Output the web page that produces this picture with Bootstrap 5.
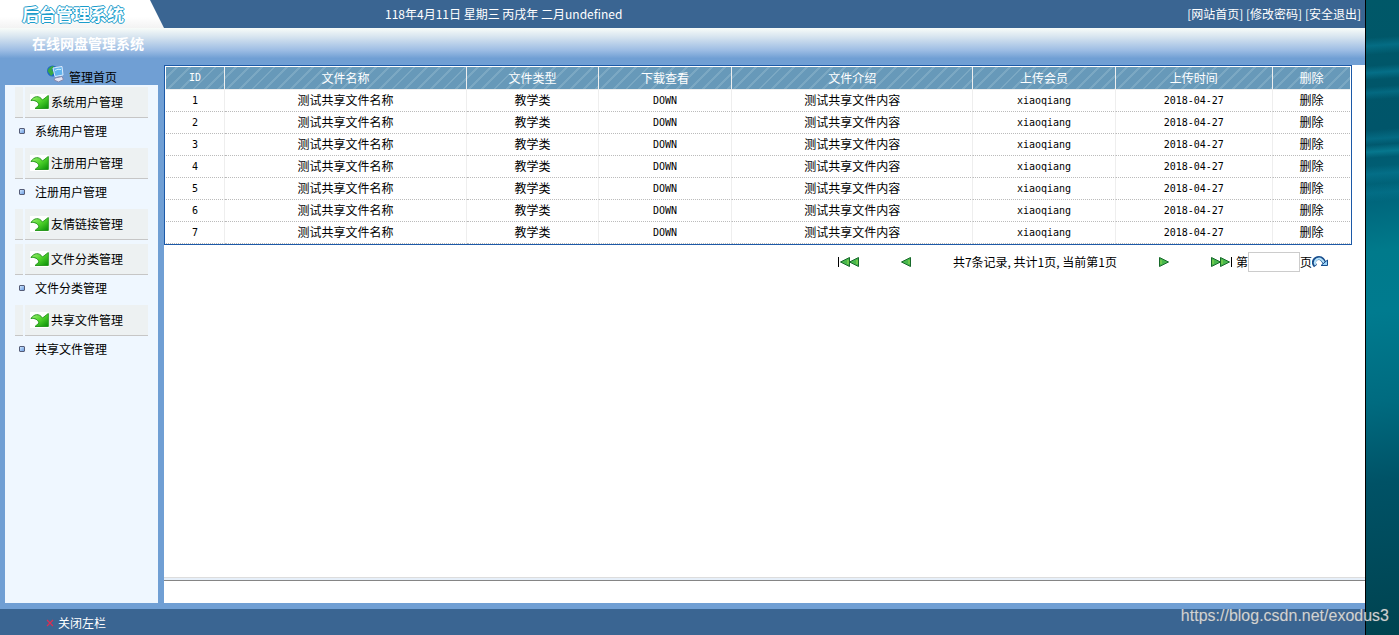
<!DOCTYPE html>
<html lang="zh-CN">
<head>
<meta charset="utf-8">
<meta name="viewport" content="width=device-width, initial-scale=1">
<title>后台管理系统</title>
<link href="https://cdn.jsdelivr.net/npm/bootstrap@5.3.0/dist/css/bootstrap.min.css" rel="stylesheet">
<style>
body{font:12px/18px "Noto Sans CJK SC",sans-serif;color:#000;background:#fff}
a,a:hover{color:inherit;text-decoration:none}
svg{flex-shrink:0}
.app{background:#709fd4}
.desktop{width:34px;border-left:1px solid #000;background:
 linear-gradient(176deg,transparent 38px,#087f9b88 46px,transparent 55px,transparent 66px,#087f9b99 73px,transparent 80px,transparent 87px,#087f9b77 93px,transparent 100px,transparent 130px,#087f9b77 139px,transparent 145px,#0b8ba299 152px,transparent 158px,transparent 166px,#087f9b77 174px,transparent 184px,#087f9b55 193px,transparent 202px),
 linear-gradient(172deg,#005868 0,#00556a 130px,#00667c 200px,#007a8b 250px,#007b8f 310px,#006b80 400px,#005266 480px,#004350 635px)}
.topbar,.footbar{background:#3a6592;color:#fff}
.topbar{height:28px}
.logo{width:164px;background:linear-gradient(#fff 60%,#f3f3f3);clip-path:polygon(0 0,150px 0,164px 100%,0 100%);padding-left:22px;font-size:17px;line-height:28px;font-weight:700;color:#fff;text-shadow:1px 0 #1b9ccb,-1px 0 #1b9ccb,0 1px #1b9ccb,0 -1px #1b9ccb}
.date-text{padding-left:221px}
.banner{height:37px;background:linear-gradient(#f8fcf9 0,#d5e3ef 25%,#9dbde4 60%,#709fd4 82%);padding-left:32px;font-size:14px;line-height:30px;font-weight:700;color:#fff}
.sidebar{width:164px;padding:0 6px 0 5px}
.home-link{height:20px;padding-left:41px;gap:4px;line-height:24px}
.menu-panel{background:#eff7ff;padding:2px 10px 0}
.group{margin-bottom:4px}
.group-head{height:31px;gap:2px}
.group-head>*{border-bottom:1px solid #c6c6c6;background:#edf1f2}
.stub{width:8px}
.group-link{padding-left:5px;gap:2px}
.pic{background:#fff}
.sub-link{height:26px;padding-left:4px;gap:10px}
.dot{width:6px;height:6px;border:1px solid #555d78;border-radius:1px;background:linear-gradient(135deg,#cde6ff,#6c9ce0)}
.work{background:#fff}
.grid-wrap{border:1px solid #1c59a7;margin-right:13px;padding:1px 1px 0}
.file-grid{table-layout:fixed;width:100%;text-align:center;border-collapse:separate;border-spacing:0;line-height:16px}
.file-grid th{height:23px;padding:0;font-weight:400;color:#fff;border-right:1px solid #eee;border-bottom:1px solid #eee;background:repeating-linear-gradient(135deg,#6799b9 0 7px,#7ba8c3 7px 9px)}
.file-grid td{height:22px;padding:0 0 1px;border-right:1px solid #eee;border-bottom:1px dotted #bbb}
.file-grid td.mono{padding:1px 0 0}
.file-grid tr>:last-child{border-right:0}
.file-grid th:nth-child(1){width:5%}
.file-grid th:nth-child(2),.file-grid th:nth-child(5){width:20.4%}
.file-grid th:nth-child(3),.file-grid th:nth-child(4){width:11.2%}
.file-grid th:nth-child(6){width:12%}
.file-grid th:nth-child(7){width:13.3%}
.mono{font-family:"DejaVu Sans Mono",monospace;font-size:10px}
.pager{padding:7px 36px 0 0;line-height:20px}
.pager button,.footbar button{border:0;background:none;padding:0;color:inherit;display:flex;align-items:center}
.pager input{width:52px;height:20px;border:1px solid #ccc;padding:0 4px}
.pager-prev{margin:0 42px}
.pager-next{margin:0 42px}
.frame-edge{height:4px;margin-bottom:22px;border-top:1px solid #ddd;border-bottom:1px solid #858585;background:#e6eff9}
.footbar{height:26px;margin-top:6px;padding:5px 0 0 46px}
.watermark{right:10px;bottom:7px;font:16px/24px "Liberation Sans",sans-serif;color:#ffffffb0;text-shadow:0 0 1px #777}
</style>
</head>
<body>
<svg width="0" height="0" class="position-absolute" aria-hidden="true">
 <defs><linearGradient id="leaf" x1="0" y1="0" x2="1" y2="1"><stop stop-color="#a8f57c"/><stop offset=".5" stop-color="#4fd32b"/><stop offset="1" stop-color="#078c07"/></linearGradient></defs>
 <symbol id="arrow" viewBox="0 0 19 16"><path d="M1 6.500C4 2 9 1 12.500 6L18.300 1.500V14.500H5L9 11C8 7.500 5 6 1 6.500Z" fill="url(#leaf)" stroke="#2a9a20" stroke-linejoin="round"/></symbol>
 <symbol id="tri" viewBox="0 0 10 10"><path d="M.5 .5L9.500 5L.5 9.500Z" fill="#48b84c" stroke="#17682a"/><path d="M2 3v4" stroke="#94d94e"/></symbol>
</svg>
<div class="d-flex min-vh-100 position-relative">
 <div class="app d-flex flex-column flex-grow-1">
  <header>
   <div class="topbar d-flex align-items-stretch">
    <div class="logo">后台管理系统</div>
    <div class="date-text align-self-center">118年4月11日 星期三 丙戌年 二月undefined</div>
    <nav class="ms-auto align-self-center pe-1"><a href="#">[网站首页]</a> <a href="#">[修改密码]</a> <a href="#">[安全退出]</a></nav>
   </div>
   <div class="banner">在线网盘管理系统</div>
  </header>
  <div class="d-flex flex-grow-1">
   <aside class="sidebar d-flex flex-column flex-shrink-0">
    <a href="#" class="home-link d-flex">
     <svg width="19" height="18" viewBox="0 0 19 18"><circle cx="6.500" cy="6" r="5.500" fill="#1f66c8"/><path d="M1.500 6Q3 1 8 1L6 5 8 8 5 11Z" fill="#38a845"/><path d="M7 3L16 1.500L17 10L9 11.500Z" fill="#62b4ee" stroke="#dcecff"/><path d="M9 13l7-1.500 1.500 3-5 2.500-4.500-2Z" fill="#e3e3f2" stroke="#8589ae"/><path d="M9 5.500q3-2 6-1" stroke="#c9f1ff" fill="none"/></svg>
     管理首页</a>
    <nav class="menu-panel flex-grow-1">
     <div class="group"><div class="group-head d-flex"><span class="stub"></span><a href="#" class="group-link d-flex align-items-center flex-grow-1"><svg class="pic" width="19" height="16"><use href="#arrow"/></svg>系统用户管理</a></div><a href="#" class="sub-link d-flex align-items-center"><span class="dot"></span>系统用户管理</a></div>
     <div class="group"><div class="group-head d-flex"><span class="stub"></span><a href="#" class="group-link d-flex align-items-center flex-grow-1"><svg class="pic" width="19" height="16"><use href="#arrow"/></svg>注册用户管理</a></div><a href="#" class="sub-link d-flex align-items-center"><span class="dot"></span>注册用户管理</a></div>
     <div class="group"><div class="group-head d-flex"><span class="stub"></span><a href="#" class="group-link d-flex align-items-center flex-grow-1"><svg class="pic" width="19" height="16"><use href="#arrow"/></svg>友情链接管理</a></div></div>
     <div class="group"><div class="group-head d-flex"><span class="stub"></span><a href="#" class="group-link d-flex align-items-center flex-grow-1"><svg class="pic" width="19" height="16"><use href="#arrow"/></svg>文件分类管理</a></div><a href="#" class="sub-link d-flex align-items-center"><span class="dot"></span>文件分类管理</a></div>
     <div class="group"><div class="group-head d-flex"><span class="stub"></span><a href="#" class="group-link d-flex align-items-center flex-grow-1"><svg class="pic" width="19" height="16"><use href="#arrow"/></svg>共享文件管理</a></div><a href="#" class="sub-link d-flex align-items-center"><span class="dot"></span>共享文件管理</a></div>
    </nav>
   </aside>
   <main class="work d-flex flex-column flex-grow-1">
    <div class="grid-wrap">
     <table class="file-grid">
      <thead><tr><th class="mono">ID</th><th>文件名称</th><th>文件类型</th><th>下载查看</th><th>文件介绍</th><th>上传会员</th><th>上传时间</th><th>删除</th></tr></thead>
      <tbody>
       <tr><td class="mono">1</td><td>测试共享文件名称</td><td>教学类</td><td class="mono"><a href="#">DOWN</a></td><td>测试共享文件内容</td><td class="mono">xiaoqiang</td><td class="mono">2018-04-27</td><td><a href="#">删除</a></td></tr>
       <tr><td class="mono">2</td><td>测试共享文件名称</td><td>教学类</td><td class="mono"><a href="#">DOWN</a></td><td>测试共享文件内容</td><td class="mono">xiaoqiang</td><td class="mono">2018-04-27</td><td><a href="#">删除</a></td></tr>
       <tr><td class="mono">3</td><td>测试共享文件名称</td><td>教学类</td><td class="mono"><a href="#">DOWN</a></td><td>测试共享文件内容</td><td class="mono">xiaoqiang</td><td class="mono">2018-04-27</td><td><a href="#">删除</a></td></tr>
       <tr><td class="mono">4</td><td>测试共享文件名称</td><td>教学类</td><td class="mono"><a href="#">DOWN</a></td><td>测试共享文件内容</td><td class="mono">xiaoqiang</td><td class="mono">2018-04-27</td><td><a href="#">删除</a></td></tr>
       <tr><td class="mono">5</td><td>测试共享文件名称</td><td>教学类</td><td class="mono"><a href="#">DOWN</a></td><td>测试共享文件内容</td><td class="mono">xiaoqiang</td><td class="mono">2018-04-27</td><td><a href="#">删除</a></td></tr>
       <tr><td class="mono">6</td><td>测试共享文件名称</td><td>教学类</td><td class="mono"><a href="#">DOWN</a></td><td>测试共享文件内容</td><td class="mono">xiaoqiang</td><td class="mono">2018-04-27</td><td><a href="#">删除</a></td></tr>
       <tr><td class="mono">7</td><td>测试共享文件名称</td><td>教学类</td><td class="mono"><a href="#">DOWN</a></td><td>测试共享文件内容</td><td class="mono">xiaoqiang</td><td class="mono">2018-04-27</td><td><a href="#">删除</a></td></tr>
      </tbody>
     </table>
    </div>
    <div class="pager d-flex justify-content-end align-items-center">
     <button type="button" aria-label="首页"><svg width="21" height="10"><g transform="matrix(-1 0 0 1 21 0)"><use href="#tri" width="10" height="10"/><use href="#tri" x="9" width="10" height="10"/><path d="M20.500 0v10" stroke="#000"/></g></svg></button>
     <button type="button" class="pager-prev" aria-label="上一页"><svg width="10" height="10"><g transform="matrix(-1 0 0 1 10 0)"><use href="#tri" width="10" height="10"/></g></svg></button>
     <span>共7条记录, 共计1页, 当前第1页</span>
     <button type="button" class="pager-next" aria-label="下一页"><svg width="10" height="10"><use href="#tri" width="10" height="10"/></svg></button>
     <button type="button" class="me-1" aria-label="末页"><svg width="21" height="10"><use href="#tri" width="10" height="10"/><use href="#tri" x="9" width="10" height="10"/><path d="M20.500 0v10" stroke="#000"/></svg></button>
     <label for="page-no">第</label><input id="page-no" type="text"><span>页</span>
     <button type="button" aria-label="跳转"><svg width="17" height="12" viewBox="0 0 17 12"><path d="M3.500 10C0 6 3 2 7 2 10 2 11 4 12.500 7" fill="none" stroke="#174d8c" stroke-width="4"/><path d="M3.500 9C1.500 6 4 2.500 7 2.500 10 2.500 11 5 12.500 7.500" fill="none" stroke="#b5e2fb" stroke-width="2"/><path d="M9 9.500H15.500V4Z" fill="#9bd5fb" stroke="#174d8c"/></svg></button>
    </div>
    <div class="frame-edge mt-auto"></div>
   </main>
  </div>
  <footer class="footbar"><button type="button"><svg class="me-1" width="8" height="8" viewBox="0 0 8 8"><path d="M1 1L7 7M7 1L1 7" fill="none" stroke="#e02c50" stroke-width="1.200"/></svg>关闭左栏</button></footer>
 </div>
 <div class="desktop flex-shrink-0"></div>
 <div class="watermark position-absolute">https://blog.csdn.net/exodus3</div>
</div>
<script src="https://cdn.jsdelivr.net/npm/bootstrap@5.3.0/dist/js/bootstrap.bundle.min.js"></script>
</body>
</html>
